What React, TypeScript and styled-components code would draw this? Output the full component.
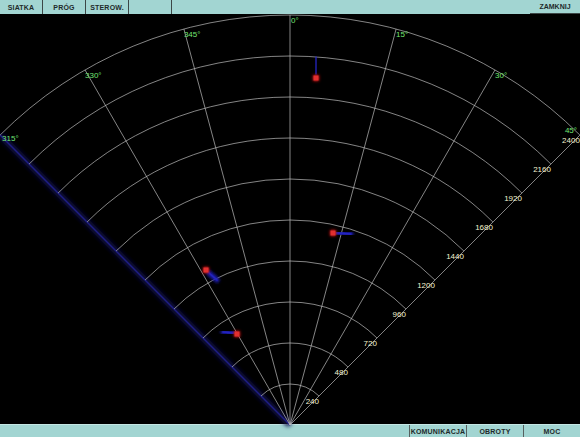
import React from 'react';
import styled, { createGlobalStyle } from 'styled-components';

const GlobalStyle = createGlobalStyle`
  html, body {
    margin: 0;
    padding: 0;
    background: #000;
  }
  body {
    font-family: 'Liberation Sans', Arial, sans-serif;
  }
`;

// radar geometry (svg coords, origin at bottom centre)
const CX = 290;
const CY = 411;
const STEP = 41;
const RINGS = 10;
const R = STEP * RINGS;

const rad = (deg: number) => (deg * Math.PI) / 180;
const pt = (deg: number, r: number) => ({
  x: CX + r * Math.sin(rad(deg)),
  y: CY - r * Math.cos(rad(deg)),
});

const arcPath = (r: number) => {
  const a = pt(-45, r);
  const b = pt(45, r);
  return `M ${a.x} ${a.y} A ${r} ${r} 0 0 1 ${b.x} ${b.y}`;
};

const spokes = [-30, -15, 0, 15, 30, 45];
const angleLabels = [
  { deg: -45, text: '315°', dx: 2, dy: 6 },
  { deg: -30, text: '330°', dx: 0, dy: 8 },
  { deg: -15, text: '345°', dx: 0, dy: 8 },
  { deg: 0, text: '0°', dx: 1, dy: 8 },
  { deg: 15, text: '15°', dx: 0, dy: 8 },
  { deg: 30, text: '30°', dx: 0, dy: 8 },
  { deg: 45, text: '45°', dx: -15, dy: -2 },
];

const targets = [
  { x: 316, y: 64, trail: 'M 316 43 L 316 60' },
  { x: 333, y: 219, trail: 'M 337 219 L 351 220' },
  { x: 206, y: 256, trail: 'M 209 259 L 217 266' },
  { x: 237, y: 320, trail: 'M 233 319 L 223 318' },
];

const topButtons = ['SIATKA', 'PRÓG', 'STEROW.', ''];
const bottomButtons = ['KOMUNIKACJA', 'OBROTY', 'MOC'];

const Radar = () => {
  const sweepEnd = pt(-45, R);
  return (
    <Scope viewBox="0 0 580 410" width={580} height={410}>
      <defs>
        <filter id="glow" x="-100%" y="-100%" width="300%" height="300%">
          <feGaussianBlur stdDeviation="1.4" />
        </filter>
        <filter id="soft" x="-50%" y="-50%" width="200%" height="200%">
          <feGaussianBlur stdDeviation="2" />
        </filter>
      </defs>

      {/* sweep line at 315 degrees */}
      <line x1={CX} y1={CY} x2={sweepEnd.x} y2={sweepEnd.y} stroke="#0e0e44" strokeWidth={6} filter="url(#soft)" />
      <line x1={CX} y1={CY} x2={sweepEnd.x} y2={sweepEnd.y} stroke="#1e1e86" strokeWidth={1.4} />

      {Array.from({ length: RINGS }, (_, i) => (
        <path key={i} d={arcPath(STEP * (i + 1))} fill="none" stroke="#bdbdbd" strokeWidth={0.7} />
      ))}

      {spokes.map((deg) => {
        const e = pt(deg, R);
        return <line key={deg} x1={CX} y1={CY} x2={e.x} y2={e.y} stroke="#bdbdbd" strokeWidth={0.7} />;
      })}

      {angleLabels.map((l) => {
        const e = pt(l.deg, R);
        return (
          <AngleText key={l.text} x={e.x + l.dx} y={e.y + l.dy}>
            {l.text}
          </AngleText>
        );
      })}

      {Array.from({ length: RINGS }, (_, i) => {
        const e = pt(45, STEP * (i + 1));
        return (
          <RangeText key={i} x={Math.min(e.x, 580)} y={e.y + 8} textAnchor="end">
            {240 * (i + 1)}
          </RangeText>
        );
      })}

      {targets.map((t, i) => (
        <g key={i}>
          <path d={t.trail} stroke="#1a1ab0" strokeWidth={5} filter="url(#glow)" strokeLinecap="round" />
          <path d={t.trail} stroke="#2626c8" strokeWidth={1.6} strokeLinecap="round" opacity={0.8} />
          <rect x={t.x - 3} y={t.y - 3} width={6} height={6} fill="#e01818" filter="url(#glow)" />
          <rect x={t.x - 2.5} y={t.y - 2.5} width={5} height={5} fill="#e23030" />
        </g>
      ))}
    </Scope>
  );
};

const App = () => (
  <>
    <GlobalStyle />
    <Screen>
      <TopBar>
        {topButtons.map((b, i) => (
          <BarButton key={i} $width={43}>
            {b}
          </BarButton>
        ))}
        <Spacer />
        <CloseButton>ZAMKNIJ</CloseButton>
      </TopBar>
      <RadarArea>
        <Radar />
      </RadarArea>
      <BottomBar>
        <Spacer />
        {bottomButtons.map((b) => (
          <BarButton key={b} $width={57} $left>
            {b}
          </BarButton>
        ))}
      </BottomBar>
    </Screen>
  </>
);

export default App;

const Screen = styled.div`
  width: 580px;
  height: 437px;
  display: flex;
  flex-direction: column;
  background: #000;
  overflow: hidden;
`;

const TopBar = styled.div`
  height: 14px;
  display: flex;
  background: #a2d5d2;
  flex-shrink: 0;
`;

const BottomBar = styled.div`
  height: 13px;
  display: flex;
  background: #a2d5d2;
  border-top: 1px solid #c4e6e4;
  box-sizing: border-box;
  flex-shrink: 0;
`;

const BarButton = styled.div<{ $width: number; $left?: boolean }>`
  width: ${({ $width }) => `${$width}px`};
  display: flex;
  align-items: center;
  justify-content: center;
  font-size: 7px;
  font-weight: bold;
  letter-spacing: 0.2px;
  color: #1e2a2a;
  box-sizing: border-box;
  border-right: ${({ $left }) => ($left ? 'none' : '1px solid #3c4646')};
  border-left: ${({ $left }) => ($left ? '1px solid #56605f' : 'none')};
`;

const CloseButton = styled.div`
  width: 50px;
  display: flex;
  align-items: center;
  justify-content: center;
  font-size: 7px;
  font-weight: bold;
  color: #1e2a2a;
  border-bottom: 1px solid #3c4646;
  box-sizing: border-box;
`;

const Spacer = styled.div`
  flex: 1;
`;

const RadarArea = styled.div`
  flex: 1;
  position: relative;
`;

const Scope = styled.svg`
  display: block;
  overflow: visible;
`;

const AngleText = styled.text`
  font-family: 'Liberation Sans', Arial, sans-serif;
  font-size: 8px;
  fill: #72e672;
`;

const RangeText = styled.text`
  font-family: 'Liberation Sans', Arial, sans-serif;
  font-size: 8px;
  fill: #f4f2d0;
`;
